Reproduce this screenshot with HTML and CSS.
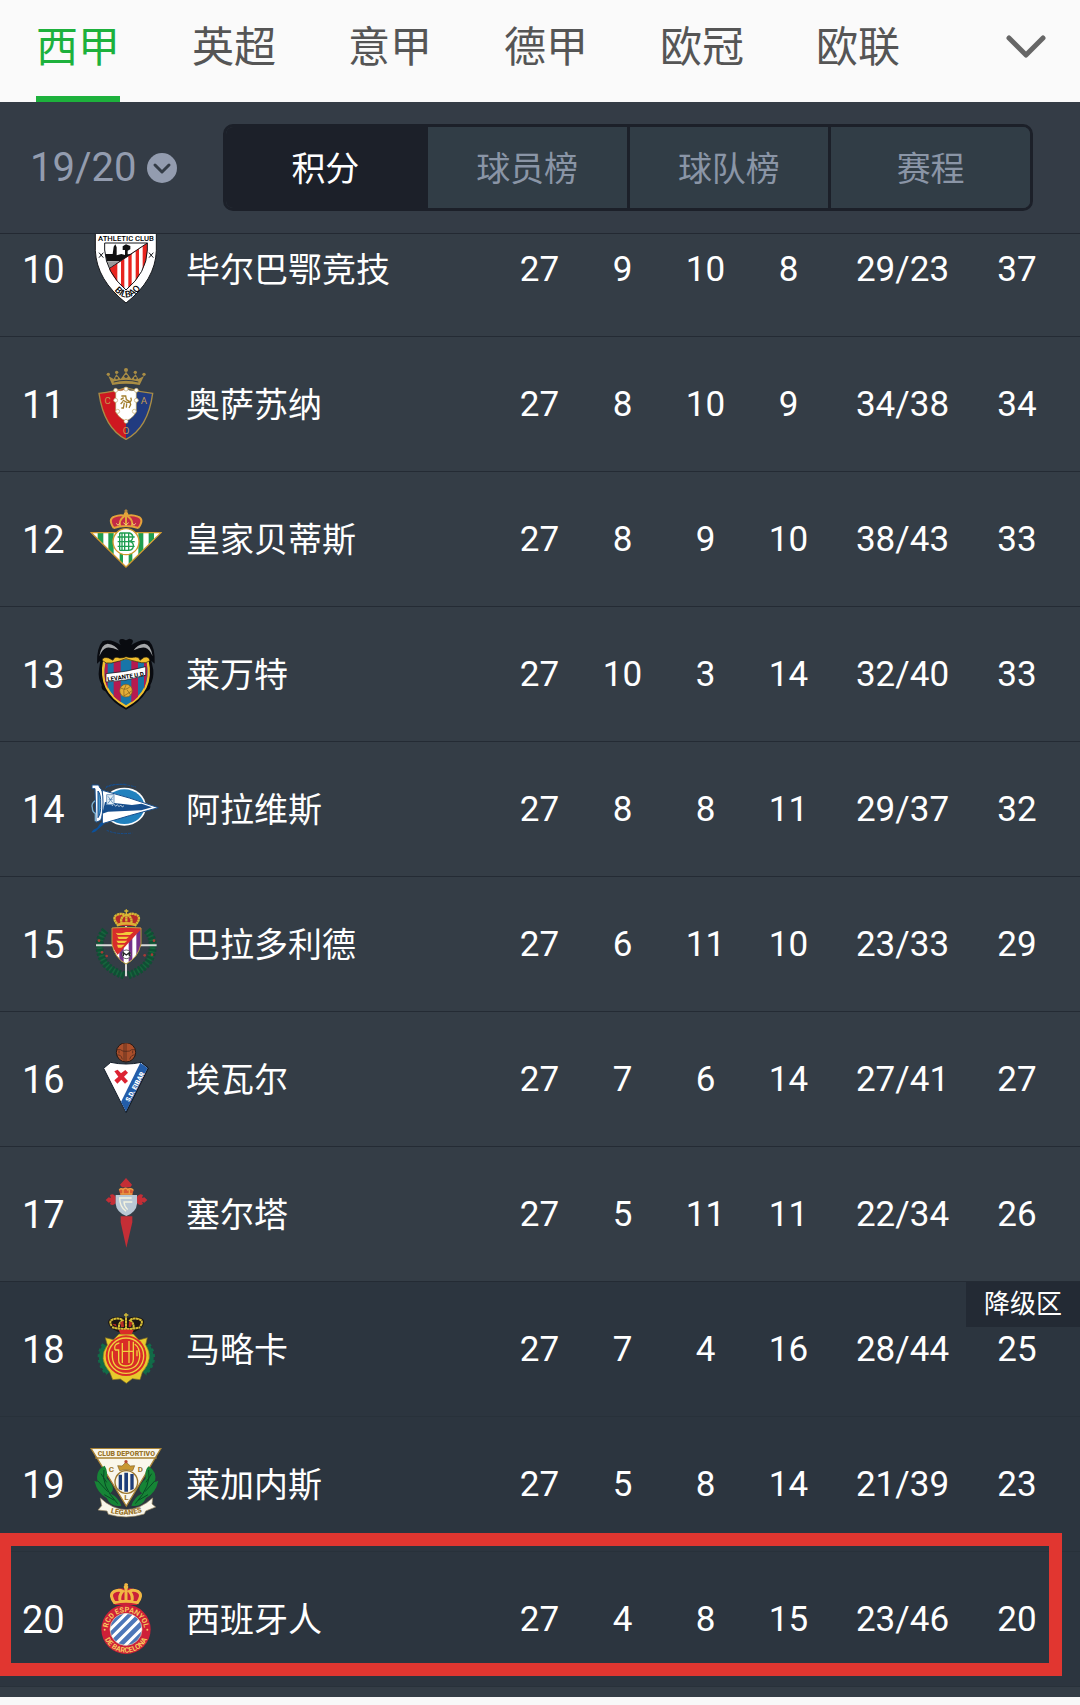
FILE: index.html
```html
<!DOCTYPE html>
<html lang="zh-CN">
<head>
  <meta charset="UTF-8">
  <meta name="viewport" content="width=device-width, initial-scale=1">
  <title>西甲积分榜</title>
  <link rel="stylesheet" href="styles.css">
</head>
<body>

  <nav class="leagues">
    <a href="#" class="league active">西甲</a>
    <a href="#" class="league">英超</a>
    <a href="#" class="league">意甲</a>
    <a href="#" class="league">德甲</a>
    <a href="#" class="league">欧冠</a>
    <a href="#" class="league">欧联</a>
    <button class="more" aria-label="更多联赛">
      <svg width="40" height="26" viewBox="0 0 40 26"><path d="M3 4 L20 21 L37 4" fill="none" stroke="#666" stroke-width="5" stroke-linecap="round" stroke-linejoin="round"/></svg>
    </button>
  </nav>

  <header class="filters">
    <label class="season">
      <select aria-label="赛季">
        <option>19/20</option>
      </select>
      <svg width="30" height="30" viewBox="0 0 30 30"><circle cx="15" cy="15" r="15" fill="#939caf"/><path d="M8 12 L15 19 L22 12" fill="none" stroke="#343c46" stroke-width="3" stroke-linecap="round" stroke-linejoin="round"/></svg>
    </label>
    <div class="segments">
      <button class="segment active">积分</button>
      <button class="segment">球员榜</button>
      <button class="segment">球队榜</button>
      <button class="segment">赛程</button>
    </div>
  </header>

  <main class="scroller">
    <table class="standings">
      <colgroup>
        <col class="col-rank"><col class="col-crest"><col>
        <col class="col-num"><col class="col-num"><col class="col-num"><col class="col-num">
        <col class="col-goals"><col class="col-points">
      </colgroup>
      <tbody>
        <tr>
          <td class="rank">10</td>
          <td class="crest">
            <svg viewBox="30 9 216 216">
              <path d="M46 9 H229 V62 Q226 150 138 219 Q50 150 46 62 Z" fill="#fff" stroke="#15171b" stroke-width="3"/>
              <path d="M74 39 H202 V60 Q200 128 138 180 Q78 128 74 60 Z" fill="#fff"/>
              <path d="M202 39 L87 116 Q104 152 138 180 Q200 128 202 60 Z" fill="#e8251f"/>
              <path d="M112 101 L123 94 V167 L112 156 Z M133 87 L145 79 V174 L138 180 L133 175 Z M155 72 L167 64 V153 L155 165 Z M177 57 L188 49 V122 L177 140 Z" fill="#fff"/>
              <path d="M76 72 H98 L101 50 L106 43 L110 52 V76 L124 72 L135 75 V60 H128 V49 L138 43 L151 48 V58 L143 62 V73 L157 71 L120 94 L80 93 Z" fill="#111"/>
              <path d="M80 94 H118 L89 113 Z" fill="#999"/>
              <path d="M74 39 H202 V60 Q200 128 138 180 Q78 128 74 60 Z M202 39 L87 116" fill="none" stroke="#15171b" stroke-width="3"/>
              <path d="M57 68 l13 15 m0 -15 l-13 15 M207 68 l13 15 m0 -15 l-13 15" stroke="#15171b" stroke-width="3"/>
              <text x="138" y="33" text-anchor="middle" font-size="23" font-weight="500">ATHLETIC CLUB</text>
              <path id="bilbao" d="M90 164 Q142 244 194 158" fill="none"/>
              <text font-size="28" font-weight="500"><textPath href="#bilbao" startOffset="50%" text-anchor="middle">BILBAO</textPath></text>
            </svg>
          </td>
          <th scope="row">毕尔巴鄂竞技</th>
          <td>27</td><td>9</td><td>10</td><td>8</td><td>29/23</td><td class="points">37</td>
        </tr>
        <tr>
          <td class="rank">11</td>
          <td class="crest">
            <svg viewBox="30 24 216 216">
              <path d="M57 100 Q103 93 138 83 V238 Q72 204 57 100 Z" fill="#ce1820"/>
              <path d="M218 100 Q176 94 138 83 V238 Q204 204 218 100 Z" fill="#213b80"/>
              <path d="M57 100 Q103 96 138 83 Q176 96 218 100 Q204 204 138 238 Q72 204 57 100 Z" fill="none" stroke="#a98d45" stroke-width="4"/>
              <path d="M107 90 Q123 96 138 86 Q153 96 169 90 V150 Q168 168 138 184 Q108 168 107 150 Z" fill="#fff" stroke="#a98d45" stroke-width="2"/>
              <g fill="#fff" stroke="#c3a765" stroke-width="2"><circle cx="107" cy="91" r="6"/><circle cx="138" cy="87" r="6"/><circle cx="169" cy="91" r="6"/><circle cx="107" cy="121" r="6"/><circle cx="169" cy="121" r="6"/><circle cx="113" cy="154" r="6"/><circle cx="163" cy="154" r="6"/><circle cx="138" cy="184" r="6"/></g>
              <path d="M124 108 h13 l2 11 10 6 q8 -2 3 -12 M122 119 l9 -6 M128 120 l12 7 10 -1 2 8 -5 10 M129 124 l-7 8 M133 128 l-3 16 h-6 M140 130 l-1 13" fill="none" stroke="#a27e2c" stroke-width="4"/>
              <path d="M97 75 L85 48 L101 57 L109 43 L122 57 L138 35 L154 57 L167 43 L175 57 L192 48 L179 75 Q138 67 97 75 Z" fill="#a98d45"/>
              <path d="M101 66 Q138 56 175 66" fill="none" stroke="#343c46" stroke-width="3"/>
              <g fill="#343c46"><circle cx="110" cy="54" r="4"/><circle cx="138" cy="49" r="5"/><circle cx="166" cy="54" r="4"/></g>
              <g fill="#a98d45"><circle cx="85" cy="43" r="5"/><circle cx="110" cy="37" r="5"/><circle cx="138" cy="30" r="6"/><circle cx="166" cy="37" r="5"/><circle cx="192" cy="43" r="5"/></g>
              <g fill="#c59a52" font-size="29" text-anchor="middle"><text x="83" y="132">C</text><text x="192" y="132">A</text><text x="138" y="221">O</text></g>
            </svg>
          </td>
          <th scope="row">奥萨苏纳</th>
          <td>27</td><td>8</td><td>10</td><td>9</td><td>34/38</td><td class="points">34</td>
        </tr>
        <tr>
          <td class="rank">12</td>
          <td class="crest">
            <svg viewBox="30 9 216 216">
              <path d="M34 98 H243 L138 201 Z" fill="#fff"/>
              <path d="M53 98 H70 V132 L53 116 Z M85 98 H101 V163 L85 148 Z M119 150 H129 V192 L119 182 Z M146 150 H157 V182 L146 192 Z M175 98 H190 V149 L175 164 Z M206 98 H222 V117 L206 133 Z" fill="#1f9d50"/>
              <path d="M34 98 H243 L138 201 Z" fill="none" stroke="#d29a2e" stroke-width="4"/>
              <circle cx="138" cy="125" r="39" fill="#fff" stroke="#d29a2e" stroke-width="4"/>
              <path d="M119 99 V151 M134 99 V151 M119 99 H149 Q160 103 158 114 Q156 124 146 125 M134 125 H149 Q162 128 160 140 Q158 151 145 151 H119 M113 111 H164 M113 125 H164 M113 139 H164 M146 101 V149 M126 99 V151" fill="none" stroke="#1f9d50" stroke-width="4"/>
              <path d="M101 84 Q83 57 103 50 Q122 42 136 48 Q156 42 174 50 Q194 57 175 84 Q138 74 101 84 Z" fill="#c32945"/>
              <path d="M101 84 Q83 57 103 50 Q123 42 134 48 Q116 60 120 77 M175 84 Q194 57 174 50 Q154 42 142 48 Q160 60 156 77 M138 45 V77 M101 84 Q138 72 175 84" fill="none" stroke="#e4a33b" stroke-width="6"/>
              <circle cx="138" cy="43" r="7" fill="#e4a33b"/><path d="M138 28 V41 M133 33 H143" stroke="#e4a33b" stroke-width="3"/>
              <path d="M109 70 l5 6 5 -6 M130 68 l8 7 8 -7 M157 70 l5 6 5 -6" fill="none" stroke="#f1d17a" stroke-width="3"/>
            </svg>
          </td>
          <th scope="row">皇家贝蒂斯</th>
          <td>27</td><td>8</td><td>9</td><td>10</td><td>38/43</td><td class="points">33</td>
        </tr>
        <tr>
          <td class="rank">13</td>
          <td class="crest">
            <svg viewBox="30 24 216 216">
              <path d="M119 40 Q114 25 129 27 L138 31 L148 26 Q163 27 157 40 L154 45 Q185 24 208 34 Q226 52 224 101 L214 92 L220 120 Q222 145 211 165 Q213 179 200 184 Q178 220 138 239 Q98 220 76 184 Q62 179 65 165 Q53 145 57 118 L61 92 L51 101 Q50 52 68 34 Q91 24 122 45 Z" fill="#090b10"/>
              <path d="M58 79 Q64 42 83 41 Q106 44 116 61 Q94 50 80 53 Q67 57 58 79 Z M218 79 Q212 42 193 41 Q170 44 161 61 Q182 50 196 53 Q209 57 218 79 Z" fill="#a6a8aa"/>
              <path d="M69 92 Q102 90 138 83 Q174 90 206 92 Q227 184 138 233 Q50 184 69 92 Z" fill="#f2c02e"/>
              <path d="M76 98 Q104 98 138 88 Q171 98 200 98 Q217 181 138 226 Q60 181 76 98 Z" fill="#1775a8"/>
              <path d="M101 96 L122 92 V216 Q110 208 101 199 Z M154 92 L174 96 V200 Q164 210 154 217 Z M76 101 L83 99 V176 Q69 146 76 101 Z M192 98 L200 99 Q206 137 192 177 Z" fill="#b51a50"/>
              <path d="M78 156 V131 Q137 127 197 110 V136 Q138 154 78 156 Z" fill="#fff" stroke="#101318" stroke-width="2"/>
              <text x="139" y="146" text-anchor="middle" font-size="18" font-weight="700" transform="rotate(-9 139 140)">LEVANTE U.D.</text>
              <circle cx="138" cy="182" r="19" fill="#e4ae38" stroke="#7b5c1c" stroke-width="2"/><path d="M122 174 Q138 183 151 169 M130 199 Q145 190 156 182 M138 165 Q128 181 132 198 M141 179 L151 194" fill="none" stroke="#7b5c1c" stroke-width="2"/>
              <path d="M66 91 Q69 79 86 84 L99 91 Q103 77 119 84 Q130 84 138 80 Q153 84 160 82 Q177 78 180 91 L192 82 Q207 78 210 92 Q198 101 184 98 Q151 91 138 86 Q120 94 94 99 Q78 103 66 91 Z" fill="#f2c02e" stroke="#20180b" stroke-width="2"/>
            </svg>
          </td>
          <th scope="row">莱万特</th>
          <td>27</td><td>10</td><td>3</td><td>14</td><td>32/40</td><td class="points">33</td>
        </tr>
        <tr>
          <td class="rank">14</td>
          <td class="crest">
            <svg viewBox="30 9 216 216">
              <ellipse cx="133" cy="110" rx="65" ry="57" fill="#fff"/>
              <ellipse cx="133" cy="110" rx="60" ry="52" fill="#2181be"/>
              <path d="M76 55 Q94 41 141 43 M80 181 Q112 195 157 189 M78 51 Q105 35 168 51" fill="none" stroke="#164e8d" stroke-width="3" stroke-dasharray="8 3"/>
              <path d="M67 61 Q145 81 235 113 Q145 137 67 161 Z" fill="#fff" stroke="#164e8d" stroke-width="3"/>
              <path d="M75 96 L156 105 L185 101 L216 112 L184 121 L84 125 L67 131 Z" fill="#164e8d"/>
              <path d="M79 103 l5 -4 4 6 5 -5 4 7 5 -5 5 7 5 -5 5 6 5 -5 5 6 5 -4" fill="none" stroke="#fff" stroke-width="2"/>
              <path d="M80 74 H102 V104 H80 Z M84 79 L99 100 M99 79 L84 100 M86 88 H98" fill="#e4eff7" stroke="#386ca3" stroke-width="2"/>
              <path d="M36 45 H56 L59 53 Q69 56 69 96 Q69 136 62 151 L48 157 L45 56 H36 Z" fill="#fff" stroke="#164e8d" stroke-width="3"/>
              <path d="M54 63 Q63 72 62 102 Q63 132 54 143 Z" fill="#4295c8" stroke="#164e8d" stroke-width="3"/>
              <path d="M45 92 Q33 101 37 113 Q37 126 46 130 V154" fill="none" stroke="#7cb3d5" stroke-width="4"/>
              <path d="M63 157 L72 162 L55 177 Q42 190 34 187 Q40 177 51 174 Z" fill="#0b519c"/>
            </svg>
          </td>
          <th scope="row">阿拉维斯</th>
          <td>27</td><td>8</td><td>8</td><td>11</td><td>29/37</td><td class="points">32</td>
        </tr>
        <tr>
          <td class="rank">15</td>
          <td class="crest">
            <svg viewBox="30 24 216 216">
              <path d="M76 91 Q49 122 64 168 Q77 208 132 226 M201 91 Q228 122 213 168 Q199 208 145 226" fill="none" stroke="#17643d" stroke-width="15"/>
              <path d="M76 91 Q49 122 64 168 Q77 208 132 226 M201 91 Q228 122 213 168 Q199 208 145 226" fill="none" stroke="#0f4f34" stroke-width="24" stroke-dasharray="7 5"/>
              <g fill="#a83b35"><circle cx="57" cy="122" r="4"/><circle cx="66" cy="157" r="4"/><circle cx="80" cy="168" r="4"/><circle cx="194" cy="166" r="4"/><circle cx="222" cy="122" r="4"/><circle cx="216" cy="164" r="4"/></g>
              <path d="M48 136 H230 M138 78 V229" stroke="#d7d9d7" stroke-width="6"/>
              <path d="M96 84 Q138 80 183 84 V132 Q174 174 138 192 Q104 174 96 132 Z" fill="#fff"/>
              <path d="M146 110 L157 98 V178 L146 187 Z M169 82 H183 V132 Q181 147 169 165 Z M118 151 L131 136 V188 L118 178 Z" fill="#74318a"/>
              <path d="M96 84 Q138 80 183 84 V88 L113 164 Q98 146 96 132 Z" fill="#d82b2b"/>
              <path d="M107 98 Q122 102 138 96 H160 L150 105 H113 Z M112 110 H147 L139 117 H116 Z M109 122 H142 L134 129 H114 Z M111 134 H134 L124 143 H114 Z" fill="#f3c93b"/>
              <path d="M96 84 Q138 80 183 84 V132 Q174 174 138 192 Q104 174 96 132 Z" fill="none" stroke="#b89b39" stroke-width="3"/>
              <circle cx="139" cy="163" r="13" fill="#fff" stroke="#17171a" stroke-width="2"/><path d="M130 169 V158 L139 165 L148 158 V169" fill="none" stroke="#25252a" stroke-width="4"/>
              <path d="M116 78 Q94 53 110 45 Q124 36 137 43 Q154 36 169 44 Q187 52 164 78 Z" fill="#b52b2a"/>
              <path d="M116 78 Q94 53 110 45 Q125 38 134 45 Q118 57 126 72 M164 78 Q187 52 169 44 Q153 38 144 45 Q160 57 152 72 M139 41 V73" fill="none" stroke="#d7b934" stroke-width="7" stroke-dasharray="7 1"/>
              <path d="M115 74 Q139 66 165 74" fill="none" stroke="#dfad36" stroke-width="8"/><path d="M139 28 V42 M133 33 H145" stroke="#d7b934" stroke-width="4"/>
            </svg>
          </td>
          <th scope="row">巴拉多利德</th>
          <td>27</td><td>6</td><td>11</td><td>10</td><td>23/33</td><td class="points">29</td>
        </tr>
        <tr>
          <td class="rank">16</td>
          <td class="crest">
            <svg viewBox="30 39 216 216">
              <path d="M71 115 L92 97 Q138 107 184 97 L205 114 L138 248 Z" fill="#fff" stroke="#121c29" stroke-width="3"/>
              <path d="M181 98 L203 114 L138 245 L123 216 Z" fill="#235da9"/>
              <path d="M184 97 L205 114 L138 248" fill="none" stroke="#121c29" stroke-width="3"/>
              <path d="M103 124 L113 119 L123 130 L136 120 L144 128 L132 140 L144 153 L135 161 L124 149 L112 161 L103 151 L115 140 Z" fill="#dc2332"/>
              <text x="148" y="217" font-size="20" font-weight="900" fill="#fff" transform="rotate(-62 148 217)">S.D. EIBAR</text>
              <circle cx="138" cy="67" r="29" fill="#aa4f2b" stroke="#241916" stroke-width="3"/>
              <path d="M138 38 V96 M132 39 V95 M109 59 H121 Q128 65 138 64 Q150 65 155 59 H167 M110 76 Q123 71 127 88 M167 76 Q154 71 149 88 M117 62 V70 M158 62 V70" fill="none" stroke="#3f231a" stroke-width="2"/>
            </svg>
          </td>
          <th scope="row">埃瓦尔</th>
          <td>27</td><td>7</td><td>6</td><td>14</td><td>27/41</td><td class="points">27</td>
        </tr>
        <tr>
          <td class="rank">17</td>
          <td class="crest">
            <svg viewBox="30 24 216 216">
              <path d="M138 24 L156 44 L151 52 H126 L120 44 Z M77 90 L86 82 L93 84 L90 75 Q101 68 107 80 V99 Q99 110 90 102 L93 95 L86 98 Z M202 90 L193 82 L186 84 L189 75 Q178 68 171 80 V99 Q179 110 189 102 L186 95 L193 98 Z M122 139 H157 V157 L139 233 L122 157 Z" fill="#c42e36"/>
              <path d="M117 60 Q125 52 138 53 Q152 52 161 60 L157 74 H121 Z" fill="#d65b32"/><path d="M121 72 H157 M118 61 Q122 52 129 60 Q137 49 143 60 Q153 52 160 61 M129 60 V70 M148 60 V70" fill="none" stroke="#e99c43" stroke-width="4"/>
              <path d="M107 75 H171 V101 Q169 126 139 138 Q109 126 107 101 Z" fill="#b9c8d5"/>
              <path d="M155 84 H119 Q119 110 138 124 M157 96 H132 Q132 107 143 119" fill="none" stroke="#f4f3df" stroke-width="4"/>
            </svg>
          </td>
          <th scope="row">塞尔塔</th>
          <td>27</td><td>5</td><td>11</td><td>11</td><td>22/34</td><td class="points">26</td>
        </tr>
        <tr class="relegation">
          <td class="rank">18</td>
          <td class="crest">
            <svg viewBox="30 429 216 216">
              <path d="M76 526 Q48 566 85 609 M201 526 Q231 566 192 609" fill="none" stroke="#126b48" stroke-width="14"/><path d="M76 526 Q48 566 85 609 M201 526 Q231 566 192 609" fill="none" stroke="#126b48" stroke-width="22" stroke-dasharray="8 7"/>
              <path d="M76 503 L100 509 L117 492 H160 L177 510 L202 503 L197 524 Q224 564 187 607 L180 629 L157 626 L139 640 L121 627 L98 629 L89 606 Q53 566 82 525 Z" fill="#e7ca2c" stroke="#806e23" stroke-width="2"/>
              <circle cx="138" cy="557" r="61" fill="#d92d27"/><circle cx="138" cy="557" r="53" fill="none" stroke="#efd03e" stroke-width="4"/>
              <path d="M105 540 H116 V571 Q116 588 138 588 Q160 588 160 568 V515 M127 519 V579 M127 544 H160 M147 513 V579 M97 544 V561 Q100 598 137 598 Q174 598 179 561 Q180 533 164 522 M105 540 Q100 522 118 519 M171 541 V559" fill="none" stroke="#f0d13d" stroke-width="4"/>
              <path d="M92 474 Q75 450 96 443 Q116 436 138 445 Q160 436 181 443 Q202 450 184 474 L164 486 H115 Z" fill="#1c1714"/>
              <path d="M95 468 Q84 451 102 447 Q120 443 128 451 Q113 461 118 476 M181 468 Q193 451 175 447 Q157 443 150 451 Q164 461 160 476 M138 444 V477 M96 472 Q138 482 181 472" fill="none" stroke="#d5bd36" stroke-width="6" stroke-dasharray="8 1"/>
              <path d="M121 457 l9 -5 2 19 h-9 z M147 453 l10 5 -4 13 h-7 z M96 461 l12 2 2 8 z" fill="#b82c26"/>
              <path d="M116 480 Q138 477 161 480 L155 493 H122 Z" fill="#d92d27"/><path d="M138 429 V445 M132 435 H145" stroke="#d5bd36" stroke-width="4"/>
            </svg>
          </td>
          <th scope="row">马略卡</th>
          <td>27</td><td>7</td><td>4</td><td>16</td><td>28/44</td><td class="points">25<span class="zone">降级区</span></td>
        </tr>
        <tr class="relegation">
          <td class="rank">19</td>
          <td class="crest">
            <svg viewBox="30 24 216 216">
              <path d="M33 25 H243 L139 198 Z" fill="#faf7eb" stroke="#a98335" stroke-width="4"/>
              <path d="M46 54 H230" stroke="#a98335" stroke-width="4"/>
              <text x="139" y="47" text-anchor="middle" font-size="21" font-weight="900" fill="#9b752b">CLUB DEPORTIVO</text>
              <g fill="#9b752b" font-size="24" font-weight="700" text-anchor="middle"><text x="94" y="97">C</text><text x="181" y="97">D</text><text x="139" y="181">L</text></g>
              <path d="M74 77 Q45 91 53 126 L43 122 Q52 160 80 174 Q93 203 124 197 Q115 172 90 160 Q112 146 80 115 Q84 93 74 77 Z M205 79 Q232 94 225 126 L235 122 Q227 160 198 174 Q185 203 154 197 Q163 172 187 160 Q165 146 197 116 Q193 93 205 79 Z" fill="#168536"/>
              <path d="M72 90 Q62 137 113 191 M53 122 L83 155 M63 101 L80 127 M73 164 L103 181 M206 90 Q215 137 166 191 M225 122 L195 155 M215 101 L198 127 M204 164 L175 181" fill="none" stroke="#084c25" stroke-width="3"/>
              <ellipse cx="139" cy="126" rx="34" ry="34" fill="#faf7eb" stroke="#9b752b" stroke-width="4"/>
              <path d="M116 104 H126 V151 L116 148 Z M133 98 H144 V155 H133 Z M151 102 H161 V147 L151 151 Z" fill="#1e3d78"/>
              <path d="M119 92 L113 77 L126 78 L138 66 L151 78 L164 77 L158 92 Q138 86 119 92 Z" fill="#c89732" stroke="#84652b" stroke-width="2"/><circle cx="138" cy="65" r="5" fill="#b74a31"/>
              <path d="M61 174 Q96 208 139 209 Q181 208 218 174 L216 192 L227 201 L197 213 L193 222 Q140 239 85 223 L81 213 L54 210 L65 197 Z" fill="#faf7eb" stroke="#9b8b66" stroke-width="2"/>
              <path id="leganes" d="M86 217 Q139 233 192 214" fill="none"/><text font-size="22" font-weight="900" fill="#9b752b"><textPath href="#leganes" startOffset="50%" text-anchor="middle">LEGANES</textPath></text>
            </svg>
          </td>
          <th scope="row">莱加内斯</th>
          <td>27</td><td>5</td><td>8</td><td>14</td><td>21/39</td><td class="points">23</td>
        </tr>
        <tr class="relegation">
          <td class="rank">20</td>
          <td class="crest">
            <svg viewBox="30 429 216 216">
              <circle cx="138" cy="568" r="74" fill="#cf2038"/>
              <circle cx="138" cy="568" r="48" fill="#4d77b9"/>
              <clipPath id="stripes"><circle cx="138" cy="568" r="48"/></clipPath>
              <path d="M82 577 L148 511 M89 599 L170 518 M105 614 L185 534 M125 627 L192 560" clip-path="url(#stripes)" stroke="#fff" stroke-width="9"/>
              <circle cx="138" cy="568" r="48" fill="none" stroke="#f4d7b4" stroke-width="2"/>
              <path id="espanyol-top" d="M84 582 A55 55 0 1 1 192 582" fill="none"/>
              <path id="espanyol-bottom" d="M68 568 A70 70 0 0 0 208 568" fill="none"/>
              <g font-size="22" font-weight="700" fill="#f6c95e"><text><textPath href="#espanyol-top" startOffset="50%" text-anchor="middle">RCD ESPANYOL</textPath></text><text><textPath href="#espanyol-bottom" startOffset="50%" text-anchor="middle">DE BARCELONA</textPath></text></g>
              <g fill="#f6c95e"><circle cx="74" cy="569" r="3"/><circle cx="202" cy="569" r="3"/></g>
              <path d="M105 495 Q82 465 101 454 Q116 440 136 448 Q158 440 175 454 Q193 466 171 495 Z" fill="#c92039"/>
              <path d="M105 490 Q86 465 101 455 Q116 447 128 454 Q115 468 121 485 M171 490 Q190 465 175 455 Q160 447 148 454 Q161 468 155 485 M138 446 V484 M104 488 Q138 479 172 488" fill="none" stroke="#f1b743" stroke-width="9"/>
              <circle cx="138" cy="441" r="7" fill="#f1b743"/><path d="M138 427 V442 M133 433 H144" stroke="#f1b743" stroke-width="4"/>
            </svg>
          </td>
          <th scope="row">西班牙人</th>
          <td>27</td><td>4</td><td>8</td><td>15</td><td>23/46</td><td class="points">20<span class="marker"></span></td>
        </tr>
      </tbody>
    </table>
  </main>

</body>
</html>
```

FILE: styles.css
```css
* {
  box-sizing: border-box;
}
body {
  margin: 0;
  font-family: Roboto, "Noto Sans CJK SC", sans-serif;
  background-color: #f8f8f8;
  color: #fff;
}
button, select {
  font-family: inherit;
  background: none;
  border: none;
  padding: 0;
  margin: 0;
  cursor: pointer;
}
svg {
  display: block;
}

/* league tabs */
.leagues {
  display: flex;
  gap: 72px;
  height: 102px;
  padding: 0 34px 0 36px;
  background-color: #fafafa;
}
.league {
  font-size: 42px;
  line-height: 96px;
  color: #555;
  text-decoration: none;
  white-space: nowrap;
}
.league.active {
  color: #1db13c;
  border-bottom: 6px solid #1db13c;
}
.more {
  height: 94px;
  margin-left: auto;
}

/* season + sections */
.filters {
  display: flex;
  align-items: center;
  height: 132px;
  padding: 0 47px 0 30px;
  background-color: #343c46;
  border-bottom: 1px solid #232932;
}
.season {
  display: flex;
  align-items: center;
  gap: 10px;
  flex: 0 0 193px;
}
.season select {
  appearance: none;
  width: 107px;
  font-size: 40px;
  line-height: 48px;
  color: #939caf;
}
.segments {
  display: flex;
  flex: 1;
  height: 87px;
  border: 3px solid #1c2029;
  border-radius: 10px;
  overflow: hidden;
}
.segment {
  flex: 1;
  padding-bottom: 2px;
  font-size: 34px;
  color: #8a95a6;
  background-color: #313d46;
}
.segment + .segment {
  border-left: 3px solid #1c2029;
}
.segment.active {
  color: #fff;
  background-color: #1c2029;
}

/* standings, the list is scrolled part of the way into row 10 */
.scroller {
  overflow: hidden;
  padding-bottom: 10px;
  background-color: #343d46;
}
.standings {
  width: 100%;
  margin-top: -32px;
  table-layout: fixed;
  border-collapse: separate;
  border-spacing: 0;
}
.col-rank {
  width: 80px;
}
.col-crest {
  width: 92px;
}
.col-num {
  width: 83px;
}
.col-goals {
  width: 145px;
}
.col-points {
  width: 105px;
}
.standings tr {
  position: relative;
}
.standings td,
.standings th {
  height: 135px;
  padding: 0;
  font-size: 35px;
  font-weight: 400;
  text-align: center;
  border-bottom: 1px solid #242b34;
}
.standings .rank {
  padding: 2px 0 0 22px;
  font-size: 38px;
  text-align: left;
}
.standings .crest svg {
  width: 72px;
  height: 72px;
  margin: 0 auto;
}
.standings th {
  padding: 0 0 4px 14px;
  font-size: 34px;
  text-align: left;
  white-space: nowrap;
}
.standings .points {
  padding-right: 21px;
}
.relegation {
  background-color: #2c353f;
}
.standings .relegation td,
.standings .relegation th {
  border-bottom-color: #28313a;
}
.zone {
  position: absolute;
  top: 0;
  right: 0;
  padding: 0 18px;
  font-size: 26px;
  line-height: 45px;
  background-color: #232a34;
}

/* red frame round the bottom team */
.marker {
  position: absolute;
  top: -19px;
  right: 18px;
  bottom: 11px;
  left: 0;
  border: 13px solid #e13630;
  border-left-width: 11px;
}
```
